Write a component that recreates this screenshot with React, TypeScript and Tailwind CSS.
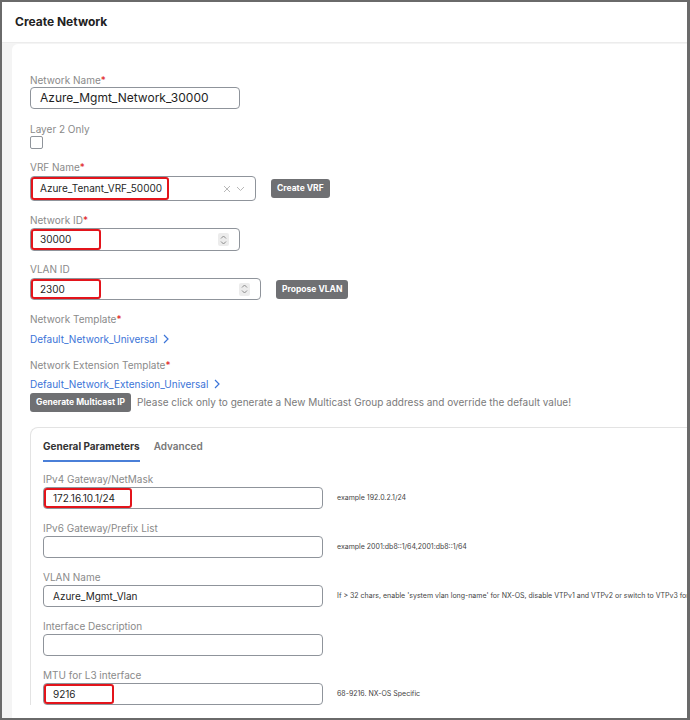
import React from 'react';

const font = { fontFamily: 'Inter, "Liberation Sans", sans-serif' };

const Req = () => <span className="text-[#e02020]">*</span>;

const Label = ({ children, className = '' }: { children: React.ReactNode; className?: string }) => (
  <div className={`h-[14px] text-[10px] leading-[14px] text-[#8a8a8a] ${className}`}>{children}</div>
);

// red highlight frame laid over the start of an input
const Mark = ({ w }: { w: number }) => (
  <div
    className="absolute left-0 top-0 bottom-0 rounded-[3px] border-2 border-[#e3141b]"
    style={{ width: w }}
  />
);

const Spinner = () => (
  <div className="flex h-[13px] w-[11px] items-center justify-center rounded-[2px] bg-[#ececec]">
    <svg width="7" height="10" viewBox="0 0 7 10" fill="none" stroke="#8c8c8c" strokeWidth="1">
      <path d="M1 3.5 L3.5 1 L6 3.5" />
      <path d="M1 6.5 L3.5 9 L6 6.5" />
    </svg>
  </div>
);

const Input = ({
  value,
  width,
  height = 22,
  mark,
  right,
  big,
}: {
  value?: string;
  width: number;
  height?: number;
  mark?: number;
  right?: React.ReactNode;
  big?: boolean;
}) => (
  <div
    className="relative flex items-center rounded-[4px] border-[1.5px] border-[#8f949b] bg-white pl-[9px] pr-[10px]"
    style={{ width, height }}
  >
    <span className={`flex-1 text-[#1f1f1f] ${big ? 'text-[12px]' : 'text-[10px]'}`}>{value}</span>
    {right}
    {mark ? <Mark w={mark} /> : null}
  </div>
);

const GrayButton = ({ children, className = '' }: { children: React.ReactNode; className?: string }) => (
  <button
    className={`flex h-[19px] items-center rounded-[3px] bg-[#6f7073] px-[6px] text-[8.5px] font-bold text-white ${className}`}
  >
    {children}
  </button>
);

const Chevron = () => (
  <svg width="6" height="10" viewBox="0 0 6 10" fill="none" stroke="#3b74d8" strokeWidth="1.2" className="ml-[6px]">
    <path d="M1 1 L5 5 L1 9" />
  </svg>
);

const Param = ({
  label,
  value,
  mark,
  hint,
}: {
  label: string;
  value?: string;
  mark?: number;
  hint?: string;
}) => (
  <div className="mt-[12px] first:mt-0">
    <Label>{label}</Label>
    <div className="mt-[1px] flex items-center">
      <Input value={value} width={280} mark={mark} />
      <span className="ml-[14px] whitespace-nowrap text-[7px] text-[#444]">{hint}</span>
    </div>
  </div>
);

export default function App() {
  return (
    <div
      className="flex h-[720px] w-[690px] flex-col overflow-hidden border-2 border-r-[3px] border-[#6a6a6a] bg-white"
      style={font}
    >
      <div className="flex h-[41px] shrink-0 items-center border-b border-[#ececec] px-[13px]">
        <h1 className="text-[12px] font-bold text-[#222]">Create Network</h1>
      </div>

      <div className="flex flex-1 bg-[#f4f4f4] pl-[10px] pt-[1px]">
        <div className="flex-1 rounded-tl-[6px] bg-white pl-[18px] pt-[29px]">
          <Label>
            Network Name<Req />
          </Label>
          <Input value="Azure_Mgmt_Network_30000" width={210} big />

          <Label className="mt-[13px]">Layer 2 Only</Label>
          <div className="h-[13px] w-[13px] rounded-[2px] border-[1.5px] border-[#8f949b]" />

          <Label className="mt-[11px]">
            VRF Name<Req />
          </Label>
          <div className="mt-[2px] flex items-center">
            <Input
              value="Azure_Tenant_VRF_50000"
              width={226}
              height={25}
              mark={138}
              right={
                <div className="flex items-center gap-[5px]">
                  <svg width="8" height="8" viewBox="0 0 8 8" stroke="#b8b8b8" strokeWidth="1">
                    <path d="M1 1 L7 7 M7 1 L1 7" />
                  </svg>
                  <svg width="9" height="6" viewBox="0 0 9 6" fill="none" stroke="#b8b8b8" strokeWidth="1">
                    <path d="M1 1 L4.5 4.5 L8 1" />
                  </svg>
                </div>
              }
            />
            <GrayButton className="ml-[15px]">Create VRF</GrayButton>
          </div>

          <Label className="mt-[12px]">
            Network ID<Req />
          </Label>
          <div className="mt-[1px]">
            <Input value="30000" width={210} height={23} mark={70} right={<Spinner />} />
          </div>

          <Label className="mt-[11px]">VLAN ID</Label>
          <div className="mt-[2px] flex items-center">
            <Input value="2300" width={231} mark={70} right={<Spinner />} />
            <GrayButton className="ml-[15px]">Propose VLAN</GrayButton>
          </div>

          <Label className="mt-[12px]">
            Network Template<Req />
          </Label>
          <div className="mt-[6px] flex h-[14px] items-center text-[10px] text-[#3b74d8]">
            Default_Network_Universal
            <Chevron />
          </div>

          <Label className="mt-[12px]">
            Network Extension Template<Req />
          </Label>
          <div className="mt-[5px] flex h-[14px] items-center text-[10px] text-[#3b74d8]">
            Default_Network_Extension_Universal
            <Chevron />
          </div>
          <div className="mt-[2px] flex items-center">
            <GrayButton>Generate Multicast IP</GrayButton>
            <span className="ml-[6px] whitespace-nowrap text-[10px] text-[#7a7a7a]">
              Please click only to generate a New Multicast Group address and override the default value!
            </span>
          </div>

          <div className="mt-[15px] rounded-tl-[8px] border-l border-t border-[#e3e3e3] pl-[12px] pt-[11px]">
            <div className="flex items-end gap-[14px]">
              <div className="border-b-2 border-[#4a7fd8] pb-[6px] text-[10px] font-bold text-[#333]">
                General Parameters
              </div>
              <div className="pb-[8px] text-[10px] font-semibold text-[#777]">Advanced</div>
            </div>

            <div className="mt-[10px]">
              <Param label="IPv4 Gateway/NetMask" value="172.16.10.1/24" mark={88} hint="example 192.0.2.1/24" />
              <Param
                label="IPv6 Gateway/Prefix List"
                hint="example 2001:db8::1/64,2001:db8::1/64"
              />
              <Param
                label="VLAN Name"
                value="Azure_Mgmt_Vlan"
                hint="If > 32 chars, enable 'system vlan long-name' for NX-OS, disable VTPv1 and VTPv2 or switch to VTPv3 for VLAN name more than 32 chars"
              />
              <Param label="Interface Description" />
              <Param label="MTU for L3 interface" value="9216" mark={70} hint="68-9216. NX-OS Specific" />
            </div>
          </div>
        </div>
      </div>
    </div>
  );
}
